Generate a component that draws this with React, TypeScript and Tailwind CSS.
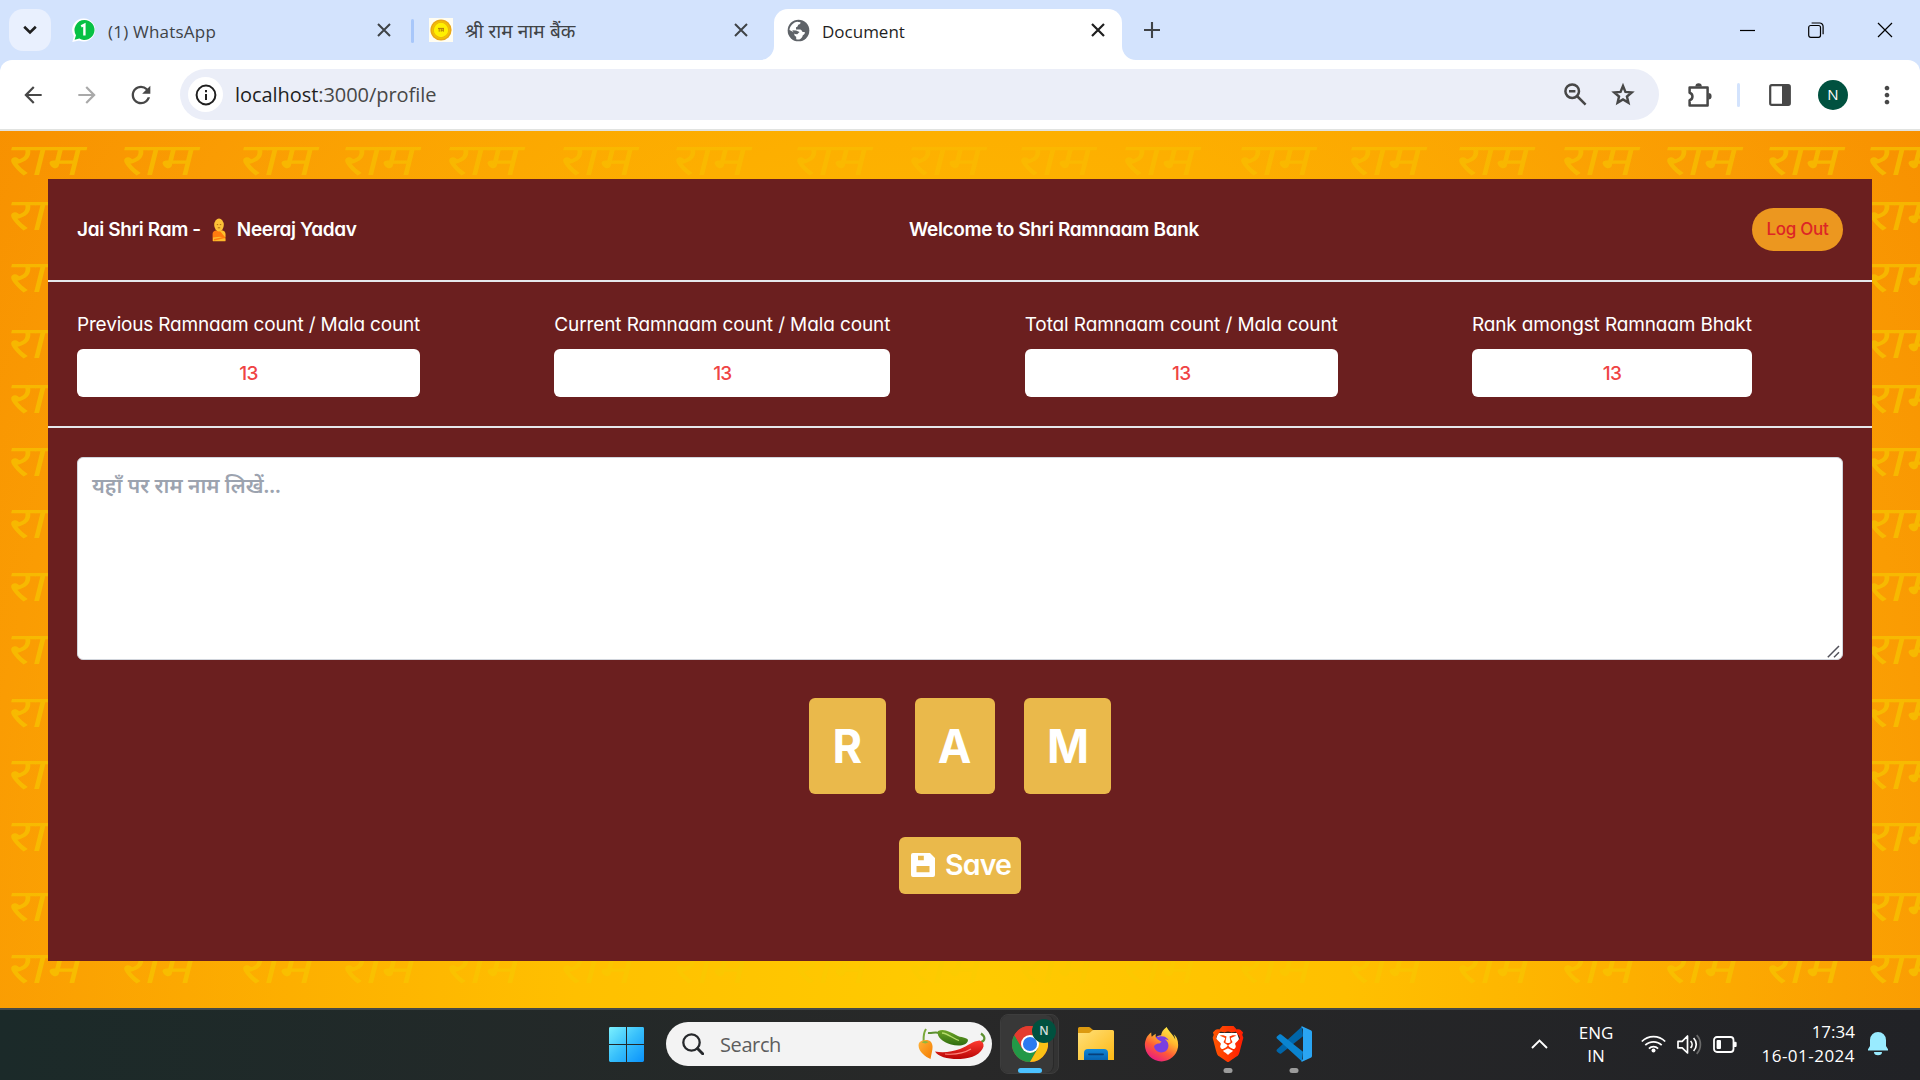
import type { ReactNode } from "react";
import { SiBrave } from "react-icons/si";
import { FaFirefoxBrowser } from "react-icons/fa";
import { MdArrowBack, MdArrowForward, MdRefresh, MdMoreVert } from "react-icons/md";

const wordColumns = [10, 123, 242, 344, 448, 562, 675, 796, 910, 1020, 1124, 1240, 1350, 1458, 1563, 1666, 1768, 1869];
const wordRows = [145, 200, 262, 328, 383, 446, 508, 571, 634, 697, 759, 821, 891, 953];

const stats = [
  { label: "Previous Ramnaam count / Mala count", width: "w-[343px]", track: "tracking-[-0.18px]" },
  { label: "Current Ramnaam count / Mala count", width: "w-[336px]", track: "tracking-[-0.11px]" },
  { label: "Total Ramnaam count / Mala count", width: "w-[313px]", track: "tracking-[-0.1px]" },
  { label: "Rank amongst Ramnaam Bhakt", width: "w-[280px]", track: "tracking-[-0.14px]" },
];

const letters = [
  { char: "R", width: "w-[77px]" },
  { char: "A", width: "w-20" },
  { char: "M", width: "w-[87px]" },
];

function Cross({ size, stroke, color }: { size: number; stroke: number; color: string }) {
  return (
    <svg width={size} height={size} viewBox={`0 0 ${size} ${size}`} className="shrink-0" stroke={color} strokeWidth={stroke} fill="none">
      <path d={`M1 1 L${size - 1} ${size - 1} M${size - 1} 1 L1 ${size - 1}`} />
    </svg>
  );
}

function WhatsAppIcon() {
  return (
    <svg width="24" height="24" viewBox="0 0 24 24" className="shrink-0">
      <path d="M12 0.4a11.5 11.5 0 1 1-5 22L0.3 24l1.6-6A11.5 11.5 0 0 1 12 .4z" fill="#fff" />
      <path d="M12.4 2a10 10 0 1 1-5 18.6L2.6 21.8l1.4-4.6A10 10 0 0 1 12.4 2z" fill="#07c144" />
      <path d="M9.2 8.4l3.2-1.6v10.6" stroke="#fff" strokeWidth="2.4" fill="none" />
    </svg>
  );
}

function BankIcon() {
  return (
    <svg width="24" height="24" viewBox="0 0 24 24" className="shrink-0">
      <rect width="24" height="24" fill="#fffdf2" />
      <circle cx="12" cy="12" r="10.6" fill="#e9a716" />
      <circle cx="12" cy="12" r="7.2" fill="#fff000" />
      <circle cx="12" cy="12" r="8.4" fill="none" stroke="#f2c400" strokeWidth="1.4" />
      <path d="M9 10.4h6M10.2 10.5v3.2M12.2 10.5v3.2M14.3 10.5v3.2M12.2 12.2h2" stroke="#b07a10" strokeWidth="1" fill="none" />
    </svg>
  );
}

function GlobeIcon() {
  return (
    <svg width="23" height="23" viewBox="0 0 24 24" className="shrink-0">
      <circle cx="12" cy="12" r="11.3" fill="#5f6368" />
      <path d="M2.6 11.5C3 7 6.8 3.2 11 2.8c1 .2 2.6.4 3.2.9-.1 1.5-1.2 2.2-2.6 2.4-.4 1.4-.6 2.4-2.2 2.6v2.2h4.5c1.4.3 1.6 1.8 2.4 2.6h2.2c.6 1.9-.8 2.6-2 3.4-.2 1.8-1.7 3.8-3.6 4.4-1 .2-2.4.1-3.3-.2v-2.5c-1.2-.5-2-1.4-2-2.6v-1.8z" fill="#fff" />
      <path d="M5.5 11.8l4 .2 3.6 1.6-2.4 2.2-2.8-.2z" fill="#5f6368" />
    </svg>
  );
}

function BrowserTabs() {
  return (
    <div className="flex h-[60px] bg-[#d3e3fd] font-['Open_Sans','Noto_Sans',sans-serif] text-[17px] text-[#3f4347]">
      <div className="mt-[9px] ml-[9px] flex size-[42px] items-center justify-center rounded-[14px] bg-[#e9f0fe]">
        <svg width="14" height="10" viewBox="0 0 14 10" fill="none" stroke="#1f1f1f" strokeWidth="2.6">
          <path d="M1.2 1.8L7 7.5l5.8-5.7" />
        </svg>
      </div>
      <div className="flex w-[360px] items-center pl-[21px]">
        <WhatsAppIcon />
        <span className="ml-3 pt-[3px] tracking-[0.22px]">(1) WhatsApp</span>
        <span className="mr-[20px] ml-auto"><Cross size={14} stroke={2} color="#3f4347" /></span>
      </div>
      <div className="mt-[19px] h-6 w-[3px] rounded bg-[#a8c7fa]" />
      <div className="flex w-[360px] items-center pl-[15px]">
        <BankIcon />
        <span className="ml-3 pt-0.5 font-['Noto_Sans',sans-serif] text-[19px] tracking-[0.1px]">श्री राम नाम बैंक</span>
        <span className="mr-[26px] ml-auto"><Cross size={14} stroke={2} color="#3f4347" /></span>
      </div>
      <div className="relative mt-[9px] flex h-[51px] w-[348px] items-center rounded-t-[14px] bg-white pb-[9px] text-[#1f1f1f]">
        <svg className="absolute -left-[14px] bottom-0" width="14" height="14" viewBox="0 0 14 14"><path d="M14 0v14H0A14 14 0 0 0 14 0z" fill="#fff" /></svg>
        <svg className="absolute -right-[14px] bottom-0" width="14" height="14" viewBox="0 0 14 14"><path d="M0 0v14h14A14 14 0 0 1 0 0z" fill="#fff" /></svg>
        <span className="ml-[13px]"><GlobeIcon /></span>
        <span className="ml-3 pt-[3px]">Document</span>
        <span className="mr-[17px] ml-auto"><Cross size={14} stroke={2.2} color="#1f1f1f" /></span>
      </div>
      <div className="flex grow items-center pr-[27px] pl-[22px]">
        <svg width="16" height="16" viewBox="0 0 16 16" stroke="#3f4347" strokeWidth="2.1"><path d="M8 0v16M0 8h16" /></svg>
        <svg className="ml-auto" width="15" height="15" viewBox="0 0 15 15" stroke="#000" strokeWidth="1.2"><path d="M0 7.5h15" /></svg>
        <svg className="ml-[53px]" width="16" height="16" viewBox="0 0 16 16" fill="none" stroke="#000" strokeWidth="1.2">
          <rect x="0.7" y="3.5" width="11.8" height="11.8" rx="2" />
          <path d="M3.6 1h7.9a3.4 3.4 0 0 1 3.6 3.6v7.6" />
        </svg>
        <span className="ml-[53px]"><Cross size={16} stroke={1.2} color="#000" /></span>
      </div>
    </div>
  );
}

function Toolbar() {
  return (
    <div className="bg-[#d3e3fd]">
      <div className="flex h-[71px] items-center rounded-t-xl border-b-2 border-[#e1e3e1] bg-white font-['Open_Sans',sans-serif] text-[#474747]">
        <MdArrowBack className="ml-[20px] size-[26px]" />
        <MdArrowForward className="ml-[28px] size-[26px] text-[#a9a9a9]" />
        <MdRefresh className="ml-[27px] size-[28px]" />
        <div className="ml-[25px] flex h-[51px] w-[1479px] items-center rounded-full bg-[#ebeef8] pl-2">
          <div className="flex size-[35px] items-center justify-center rounded-full bg-white">
            <svg width="22" height="22" viewBox="0 0 22 22" fill="none" stroke="#1f1f1f" strokeWidth="2">
              <circle cx="11" cy="11" r="9.4" />
              <path d="M11 10v6M11 6v2.2" />
            </svg>
          </div>
          <span className="ml-3 text-xl tracking-[-0.06px] text-[#474747]"><span className="text-[#1f1f1f]">localhost</span>:3000/profile</span>
          <svg className="ml-auto" width="23" height="23" viewBox="0 0 23 23" fill="none" stroke="#474747" strokeWidth="2.5">
            <circle cx="8.2" cy="8.2" r="6.8" />
            <path d="M13 13l8.600 8.600M5 8.200h6.400" />
          </svg>
          <svg className="mr-[22px] ml-[22px]" width="28" height="28" viewBox="0 0 24 24" fill="none" stroke="#474747" strokeWidth="2.1">
            <path d="M12 4.300l2.100 5 5.400.45-4.100 3.550 1.230 5.250L12 15.750l-4.630 2.800 1.230-5.250L4.500 9.750l5.400-.45z" />
          </svg>
        </div>
        <svg className="ml-[27px]" width="26" height="26" viewBox="0 0 26 26">
          <path d="M3.6 5.4h18v18h-18v-5.2c3.8-1 3.8-6.4 0-7.4z" fill="none" stroke="#474747" strokeWidth="2.5" strokeLinejoin="round" />
          <path d="M9.4 4.400a3.200 3.200 0 0 1 6.400 0zM22.400 11a3.200 3.200 0 0 1 0 6.400z" fill="#474747" />
        </svg>
        <div className="ml-[25px] h-6 w-[3px] rounded bg-[#d3e3fd]" />
        <svg className="ml-[29px]" width="22" height="22" viewBox="0 0 22 22">
          <rect x="1.2" y="1.2" width="19.6" height="19.6" rx="1.6" fill="none" stroke="#474747" strokeWidth="2.2" />
          <path d="M13 1h7v20h-7z" fill="#474747" />
        </svg>
        <div className="ml-[27px] flex size-[30px] items-center justify-center rounded-full bg-[#00513f] text-[15px] text-white">N</div>
        <MdMoreVert className="ml-[25px] size-[28px]" />
      </div>
    </div>
  );
}

function RamPattern() {
  return (
    <svg className="absolute inset-0" width="1920" height="877" viewBox="0 131 1920 877" fontFamily="'Noto Sans', 'Noto Sans Devanagari', sans-serif" fontSize="45" fontWeight="400" fill="#f6cf00">
      {wordRows.map((y) =>
        wordColumns
          .filter((x) => y < 150 || y > 940 || x < 20 || x > 1860)
          .map((x) => (
            <text key={`${x}-${y}`} transform={`translate(${x - 5} ${y + 30}) skewX(-14) scale(1.31 1)`} opacity={0.24 + 0.34 * Math.min(1, Math.abs(x - 925) / 900)}>
              राम
            </text>
          )),
      )}
    </svg>
  );
}

function Devotee() {
  return (
    <svg width="14" height="24" viewBox="0 0 14 24" className="mx-[11px] shrink-0 -translate-y-px">
      <path d="M0.6 23V16c0-2.2 1.6-3.4 3.6-3.4h5.6c2 0 3.6 1.2 3.6 3.4v7z" fill="#ff7a0f" />
      <path d="M7.5 12.6h2.3c2 0 3.6 1.2 3.6 3.4v3.4z" fill="#fdbf2d" />
      <path d="M1 19.6l7-.8 5.4 1.6v2.8H1z" fill="#fcb92b" />
      <path d="M2 21.8l10-2.2" stroke="#ff7a0f" strokeWidth="1.4" />
      <ellipse cx="7" cy="7" rx="4.8" ry="6.4" fill="#fdc137" />
      <path d="M4.8 6.6h1.4M7.8 6.6h1.4M5.8 9.8h2.4" stroke="#a8650e" strokeWidth="0.9" />
    </svg>
  );
}

function ProfilePanel() {
  return (
    <main className="relative mx-12 h-[782px] bg-[#6b1f1f] text-[19px] text-white">
      <header className="flex h-[103px] items-center border-b-2 border-gray-200 px-[29px] font-semibold tracking-[-0.36px]">
        <div className="flex w-[832px] items-center pt-0.5">
          <span>Jai Shri Ram -</span>
          <Devotee />
          <span>Neeraj Yadav</span>
        </div>
        <h1 className="pt-0.5">Welcome to Shri Ramnaam Bank</h1>
        <button className="ml-auto flex h-[43px] w-[91px] items-center justify-center rounded-full bg-[#ec971f] pt-px text-[17px] font-medium tracking-[-0.3px] text-[#dc2626]">Log Out</button>
      </header>
      <section className="flex h-[146px] justify-between border-b-2 border-gray-200 pt-[29px] pr-[120px] pl-[29px]">
        {stats.map((s) => (
          <div key={s.label} className={s.width}>
            <div className={`h-[38px] leading-7 whitespace-nowrap ${s.track}`}>{s.label}</div>
            <div className="flex h-12 items-center justify-center rounded-md bg-white pt-0.5 font-medium tracking-[-0.7px] text-[#ef4444]">13</div>
          </div>
        ))}
      </section>
      <section className="px-[29px] pt-[29px]">
        <div className="relative h-[203px] rounded-md border border-gray-300 bg-white pt-3 pl-3.5 font-['Noto_Sans',sans-serif] text-[20.9px] leading-[30px] font-semibold text-[#9ca3af]">
          यहाँ पर राम नाम लिखें...
          <svg className="absolute right-[2px] bottom-[1px]" width="13" height="13" viewBox="0 0 13 13" stroke="#52525b" strokeWidth="1.5"><path d="M.8 12.2L12 1M7 12.2l5-5" /></svg>
        </div>
        <div className="mt-[38px] flex justify-center gap-[29px]">
          {letters.map((l) => (
            <button key={l.char} className={`flex h-24 items-center justify-center rounded-md bg-[#eab94b] text-[47px] font-bold ${l.width}`}>
              <span className="scale-x-[0.96]">{l.char}</span>
            </button>
          ))}
        </div>
        <button className="mx-auto mt-[43px] flex h-[57px] w-[122px] items-center rounded-md bg-[#eab94b] pl-3 text-[28.5px] font-semibold tracking-[-0.8px]">
          <svg width="24" height="24" viewBox="0 0 24 24" className="shrink-0 -translate-y-px">
            <path fillRule="evenodd" fill="#fff" d="M2 0h17l5 5v17a2 2 0 0 1-2 2H2a2 2 0 0 1-2-2V2a2 2 0 0 1 2-2zM7 2.8v4.4h5.8V2.8zM5.5 13v6.2h13V13z" />
          </svg>
          <span className="ml-[10px]">Save</span>
        </button>
      </section>
    </main>
  );
}

function WindowsLogo() {
  return (
    <svg width="35" height="35" viewBox="0 0 35 35">
      <defs>
        <linearGradient id="win" gradientUnits="userSpaceOnUse" x1="0" y1="0" x2="35" y2="35">
          <stop offset="0" stopColor="#7cf1ff" />
          <stop offset="0.5" stopColor="#38c0fb" />
          <stop offset="1" stopColor="#0a92fb" />
        </linearGradient>
      </defs>
      <path fill="url(#win)" d="M1.4 0H17v17H0V1.400A1.400 1.400 0 0 1 1.400 0zM18 0h15.600A1.400 1.400 0 0 1 35 1.400V17H18zM0 18h17v17H1.400A1.400 1.400 0 0 1 0 33.600zM18 18h17v15.600a1.400 1.400 0 0 1-1.400 1.400H18z" />
    </svg>
  );
}

function Chillies() {
  return (
    <svg width="68" height="32" viewBox="0 0 68 32">
      <defs>
        <linearGradient id="red" x1="0" y1="0" x2="0" y2="1"><stop offset="0" stopColor="#ff3b30" /><stop offset="1" stopColor="#b80505" /></linearGradient>
        <linearGradient id="grn" x1="0" y1="0" x2="0" y2="1"><stop offset="0" stopColor="#6fa528" /><stop offset="1" stopColor="#2f6c10" /></linearGradient>
        <linearGradient id="org" x1="0" y1="0" x2="1" y2="1"><stop offset="0" stopColor="#ffb43a" /><stop offset="1" stopColor="#f47a00" /></linearGradient>
      </defs>
      <path d="M8 1c-2 3-2.600 7-2.400 12" fill="none" stroke="#7aa93a" strokeWidth="2" />
      <path d="M1 15c2-3 9-4.500 12-1 3 4 1 9-.5 17C7 29-1.500 22 1 15z" fill="url(#org)" />
      <path d="M3.500 14.500c2-2 5-2.200 7-.3l-3 1.200z" fill="#8fb83c" />
      <path d="M10 5c4 .6 7-1.500 11 0" fill="none" stroke="#5d9130" strokeWidth="2" />
      <path d="M20 3c6-3 12 1 18 4 5 3 11 2 12 5C49.500 18 40 18.500 33 16.500 25 14 18 9 20 3z" fill="url(#grn)" />
      <path d="M24 5c6 .5 10 5 17 7.500" stroke="#b6dc6c" strokeWidth="1.300" fill="none" />
      <path d="M63 14c4-1 5-5 0-8.500" fill="none" stroke="#5d9130" strokeWidth="2.200" />
      <path d="M17 23.500c8 1.500 17 .5 25-2.500 8-3 13-8 19.500-8.500 3 1 4.500 3 4 6-2 7-11 12-23 12.500C31 31.500 20 29 17 23.500z" fill="url(#red)" />
      <path d="M27 26c11 1 20-1.500 26-5" stroke="#ff8a80" strokeWidth="1.200" fill="none" />
    </svg>
  );
}

function ChromeLogo() {
  return (
    <svg width="36" height="36" viewBox="0 0 48 48">
      <circle cx="24" cy="24" r="24" fill="#e33b2e" />
      <path d="M3.200 12A24 24 0 0 0 24 48l10.400-18H13.600z" fill="#229847" />
      <path d="M44.800 12A24 24 0 0 1 24 48l10.400-18L24 12z" fill="#fbc116" />
      <path d="M3.200 12L13.600 30 24 12h20.800A24 24 0 0 0 3.200 12z" fill="#e33b2e" />
      <circle cx="24" cy="24" r="12" fill="#fff" />
      <circle cx="24" cy="24" r="9.400" fill="#2b7af0" />
    </svg>
  );
}

function FolderIcon() {
  return (
    <svg width="36" height="34" viewBox="0 0 36 34">
      <defs>
        <linearGradient id="fold" x1="0" y1="0" x2="1" y2="1"><stop offset="0" stopColor="#ffe07a" /><stop offset="1" stopColor="#fdb813" /></linearGradient>
        <linearGradient id="tray" x1="0" y1="0" x2="0" y2="1"><stop offset="0" stopColor="#1288d8" /><stop offset="1" stopColor="#0762b0" /></linearGradient>
      </defs>
      <path d="M0 1.500A1.500 1.500 0 0 1 1.500 0H11c1.500 0 3 3 4.500 3V8H0z" fill="#dc9a10" />
      <path d="M0 6h11c1.500 0 3-3 4.500-3H34.500A1.500 1.500 0 0 1 36 4.500V33H0z" fill="url(#fold)" />
      <path d="M6 33v-7a4 4 0 0 1 4-4h16a4 4 0 0 1 4 4v7z" fill="url(#tray)" />
      <path d="M11 27.300h14" stroke="#073f7a" strokeWidth="1.800" strokeLinecap="round" />
    </svg>
  );
}

function FirefoxLogo() {
  return (
    <div className="relative flex size-[35px] items-center justify-center">
      <svg className="absolute inset-0" width="35" height="35" viewBox="0 0 35 35">
        <defs>
          <linearGradient id="ffx" x1="0.8" y1="0" x2="0.25" y2="1">
            <stop offset="0" stopColor="#fff04a" /><stop offset="0.35" stopColor="#ffb62e" /><stop offset="0.65" stopColor="#ff5a36" /><stop offset="1" stopColor="#e6158a" />
          </linearGradient>
        </defs>
        <circle cx="17.500" cy="18" r="10" fill="#7a3fe0" />
      </svg>
      <FaFirefoxBrowser className="relative size-[35px] [&_path]:fill-[url(#ffx)]" />
    </div>
  );
}

function BraveLogo() {
  return (
    <div className="relative flex h-[36px] w-[31px] items-center justify-center">
      <svg className="absolute inset-0" width="31" height="36" viewBox="0 0 31 36">
        <defs>
          <linearGradient id="brv" x1="0" y1="0" x2="1" y2="0"><stop offset="0" stopColor="#ff5601" /><stop offset="1" stopColor="#ff1c02" /></linearGradient>
        </defs>
        <path d="M6 7h19l2 6-5 14-6.500 5L9 27 4 13z" fill="#fff" />
      </svg>
      <SiBrave className="relative size-[36px] shrink-0 [&_path]:fill-[url(#brv)]" />
    </div>
  );
}

function CodeLogo() {
  return (
    <svg width="36" height="36" viewBox="0 0 36 36">
      <path d="M26 .4L1.200 23.200c-.9.800-.9 1.700 0 2.500l1.800 1.600c.7.600 1.500.6 2.200.1L27 10.300z" fill="#0065a9" />
      <path d="M26 35.600L1.200 12.800c-.9-.8-.9-1.700 0-2.500L3 8.700c.7-.6 1.500-.6 2.200-.1L27 25.700z" fill="#0a84d0" />
      <path d="M26 35.700c-.5-.3-.6-.5-.7-.8L27 33V3l-1.700-1.900c.1-.3.300-.6.700-.8l8.700 4c.8.400 1.300 1.100 1.300 2v23.400c0 .9-.5 1.600-1.300 2z" fill="#2aa5f3" />
    </svg>
  );
}

function TaskbarApp({ left, children, dot }: { left: string; children: ReactNode; dot?: boolean }) {
  return (
    <div className={`relative flex h-[36px] shrink-0 items-center justify-center ${left}`}>
      {children}
      {dot && <span className="absolute top-[42px] left-1/2 h-[5px] w-[9px] -translate-x-1/2 rounded-full bg-[#9b9b9b]" />}
    </div>
  );
}

function Taskbar() {
  return (
    <footer className="flex h-[72px] items-center border-t-2 border-[#444949] bg-linear-to-r from-[#1b2a29] via-[#282828] via-50% to-[#212226] pb-0.5 pl-[609px] font-['Open_Sans',sans-serif] text-white">
      <WindowsLogo />
      <div className="ml-[22px] flex h-11 w-[326px] shrink-0 items-center rounded-full bg-[#f3f3f3] pl-4">
        <svg width="22" height="22" viewBox="0 0 22 22" fill="none" stroke="#26282b" strokeWidth="2.300" strokeLinecap="round">
          <circle cx="9.500" cy="9.500" r="8.200" />
          <path d="M15.500 15.500l5.200 5.200" strokeWidth="2.900" />
        </svg>
        <span className="ml-4 pt-px text-xl tracking-[-0.4px] text-[#5d5d5d]">Search</span>
        <div className="mr-[6px] ml-auto"><Chillies /></div>
      </div>
      <div className="ml-2 h-[60px] w-[59px] shrink-0 rounded-lg border border-[#3d3d3d] bg-[#333]">
        <div className="relative flex h-[58px] w-[53px] items-center justify-center rounded-lg border-r border-[#292929] bg-[#383838] pl-[5px]">
          <ChromeLogo />
          <span className="absolute top-[4px] left-[31px] flex size-6 items-center justify-center rounded-full bg-[#00513f] text-xs font-semibold text-[#d5dfdc]">N</span>
          <span className="absolute top-[53px] left-[17px] h-[5px] w-6 rounded-full bg-[#4cc2ff]" />
        </div>
      </div>
      <TaskbarApp left="ml-[19px]"><FolderIcon /></TaskbarApp>
      <TaskbarApp left="ml-[30px]"><FirefoxLogo /></TaskbarApp>
      <TaskbarApp left="ml-[33px]" dot><BraveLogo /></TaskbarApp>
      <TaskbarApp left="ml-[33px]" dot><CodeLogo /></TaskbarApp>
      <div className="ml-auto flex items-center text-[17px]">
        <svg width="17" height="10" viewBox="0 0 17 10" fill="none" stroke="#fff" strokeWidth="1.900"><path d="M1 9l7.500-7.500L16 9" /></svg>
        <div className="ml-[30px] w-9 text-center leading-[23px]">ENG<br />IN</div>
        <svg className="ml-[27px]" width="25" height="18" viewBox="0 0 25 18" fill="none" stroke="#fff" strokeWidth="1.700">
          <path d="M.8 6.500a16.500 16.500 0 0 1 23.400 0M4.300 10.200a11.600 11.600 0 0 1 16.400 0M7.900 13.600a6.500 6.500 0 0 1 9.200 0" />
          <circle cx="12.500" cy="15.600" r="2" fill="#fff" stroke="none" />
        </svg>
        <svg className="ml-[11px]" width="25" height="21" viewBox="0 0 25 21" fill="none" stroke="#fff" strokeWidth="1.700" strokeLinejoin="round">
          <path d="M1 7.400h4.200L10.500 2v17L5.200 13.800H1z" />
          <path d="M13.600 7a5 5 0 0 1 0 7M16.600 4a9.300 9.300 0 0 1 0 13" />
          <path d="M19.700 1.200a13.500 13.500 0 0 1 0 18.600" stroke="#6a6a6a" />
        </svg>
        <svg className="ml-[11px]" width="25" height="17" viewBox="0 0 25 17" fill="none" stroke="#fff" strokeWidth="1.800">
          <rect x="1" y="1" width="19.500" height="15" rx="3" />
          <rect x="3.600" y="4" width="4.400" height="9" rx="1" fill="#fff" stroke="none" />
          <path d="M20.500 6.300h2.600v4.200h-2.600z" fill="#fff" strokeWidth="1" />
        </svg>
        <div className="ml-[22px] w-[95px] text-right leading-6">17:34<br /><span className="tracking-[0.48px]">16-01-2024</span></div>
        <svg className="mr-8 ml-[13px]" width="20" height="24" viewBox="0 0 20 24" fill="#99ebff">
          <path d="M10 0a8 8 0 0 1 8 8v6l2 3.200v1.300H0v-1.300L2 14V8a8 8 0 0 1 8-8zM6 20h8a4 3.200 0 0 1-8 0z" />
        </svg>
      </div>
    </footer>
  );
}

export default function App() {
  return (
    <div className="h-[1080px] w-[1920px] overflow-hidden">
      <BrowserTabs />
      <Toolbar />
      <div className="relative h-[877px] bg-[radial-gradient(1200px_1590px_at_50%_100%,#ffcb00_0%,#ffc000_32%,#fdaf00_56%,#fa9c03_82%,#f78f00_100%)] pt-12 font-[Inter,sans-serif] [font-feature-settings:'cv11']">
        <RamPattern />
        <ProfilePanel />
      </div>
      <Taskbar />
    </div>
  );
}
